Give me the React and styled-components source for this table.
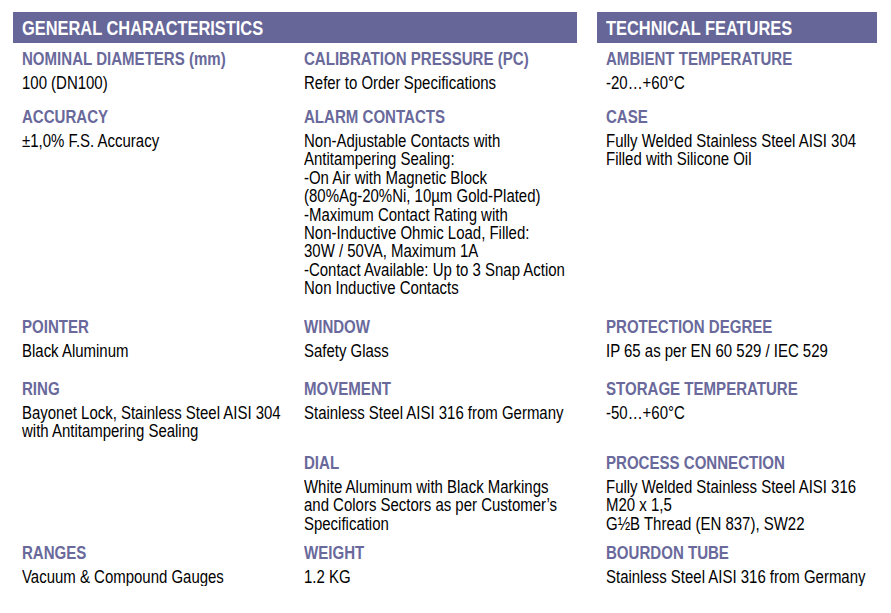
import React from "react";
import styled, { createGlobalStyle } from "styled-components";

const general = [
  [
    { title: "NOMINAL DIAMETERS (mm)", lines: ["100 (DN100)"] },
    { title: "CALIBRATION PRESSURE (PC)", lines: ["Refer to Order Specifications"] },
  ],
  [
    { title: "ACCURACY", lines: ["±1,0% F.S. Accuracy"] },
    {
      title: "ALARM CONTACTS",
      lines: [
        "Non-Adjustable Contacts with",
        "Antitampering Sealing:",
        "-On Air with Magnetic Block",
        "(80%Ag-20%Ni, 10µm Gold-Plated)",
        "-Maximum Contact Rating with",
        "Non-Inductive Ohmic Load, Filled:",
        "30W / 50VA, Maximum 1A",
        "-Contact Available: Up to 3 Snap Action",
        "Non Inductive Contacts",
      ],
    },
  ],
  [
    { title: "POINTER", lines: ["Black Aluminum"] },
    { title: "WINDOW", lines: ["Safety Glass"] },
  ],
  [
    {
      title: "RING",
      lines: ["Bayonet Lock, Stainless Steel AISI 304", "with Antitampering Sealing"],
    },
    { title: "MOVEMENT", lines: ["Stainless Steel AISI 316 from Germany"] },
  ],
  [
    null,
    {
      title: "DIAL",
      lines: [
        "White Aluminum with Black Markings",
        "and Colors Sectors as per Customer’s",
        "Specification",
      ],
    },
  ],
  [
    { title: "RANGES", lines: ["Vacuum & Compound Gauges"] },
    { title: "WEIGHT", lines: ["1.2 KG"] },
  ],
];

const technical = [
  { title: "AMBIENT TEMPERATURE", lines: ["-20…+60°C"] },
  {
    title: "CASE",
    lines: ["Fully Welded Stainless Steel AISI 304", "Filled with Silicone Oil"],
  },
  { title: "PROTECTION DEGREE", lines: ["IP 65 as per EN 60 529 / IEC 529"] },
  { title: "STORAGE TEMPERATURE", lines: ["-50…+60°C"] },
  {
    title: "PROCESS CONNECTION",
    lines: ["Fully Welded Stainless Steel AISI 316", "M20 x 1,5", "G½B Thread (EN 837), SW22"],
  },
  { title: "BOURDON TUBE", lines: ["Stainless Steel AISI 316 from Germany"] },
];

function Spec({ item }) {
  if (!item) return <div />;
  return (
    <Cell>
      <Label>{item.title}</Label>
      <Value>
        {item.lines.map((l, i) => (
          <div key={i}>{l}</div>
        ))}
      </Value>
    </Cell>
  );
}

export default function App() {
  return (
    <>
      <Global />
      <Page>
        <Left>
          <Header>
            <HeaderText>GENERAL CHARACTERISTICS</HeaderText>
          </Header>
          <Grid $cols="282px 1fr">
            {general.map((row, r) =>
              row.map((item, c) => <Spec key={r + "-" + c} item={item} />)
            )}
          </Grid>
        </Left>
        <Right>
          <Header>
            <HeaderText>TECHNICAL FEATURES</HeaderText>
          </Header>
          <Grid $cols="1fr">
            {technical.map((item, i) => (
              <Spec key={i} item={item} />
            ))}
          </Grid>
        </Right>
      </Page>
    </>
  );
}

const Global = createGlobalStyle`
  body {
    margin: 0;
    background: #ffffff;
    font-family: "Liberation Sans Narrow", "Arial Narrow", "Liberation Sans", Arial, sans-serif;
  }
`;

const Page = styled.div`
  display: flex;
  gap: 20px;
  padding: 12px 14px 0 13px;
`;

const Left = styled.div`
  width: 564px;
`;

const Right = styled.div`
  flex: 1;
`;

const Header = styled.div`
  background: #666699;
  color: #ffffff;
  height: 31px;
  line-height: 32px;
  padding-left: 9px;
  font-size: 20px;
  font-weight: bold;
  white-space: nowrap;
`;

const HeaderText = styled.div`
  transform: scaleX(0.82);
  transform-origin: left center;
`;

const Grid = styled.div`
  display: grid;
  grid-template-columns: ${(p) => p.$cols};
  grid-template-rows: 58px 210px 62px 74px 90px auto;
  padding: 6px 0 0 9px;
`;

const Cell = styled.div`
  display: flex;
  flex-direction: column;
  min-width: 0;
`;

const Label = styled.div`
  color: #69699b;
  font-size: 17.5px;
  font-weight: bold;
  line-height: 20px;
  margin-bottom: 5px;
  white-space: nowrap;
  transform: scaleX(0.86);
  transform-origin: left center;
`;

const Value = styled.div`
  color: #000000;
  font-size: 17.5px;
  line-height: 18.4px;
  white-space: nowrap;
  transform: scaleX(0.855);
  transform-origin: left top;
`;
